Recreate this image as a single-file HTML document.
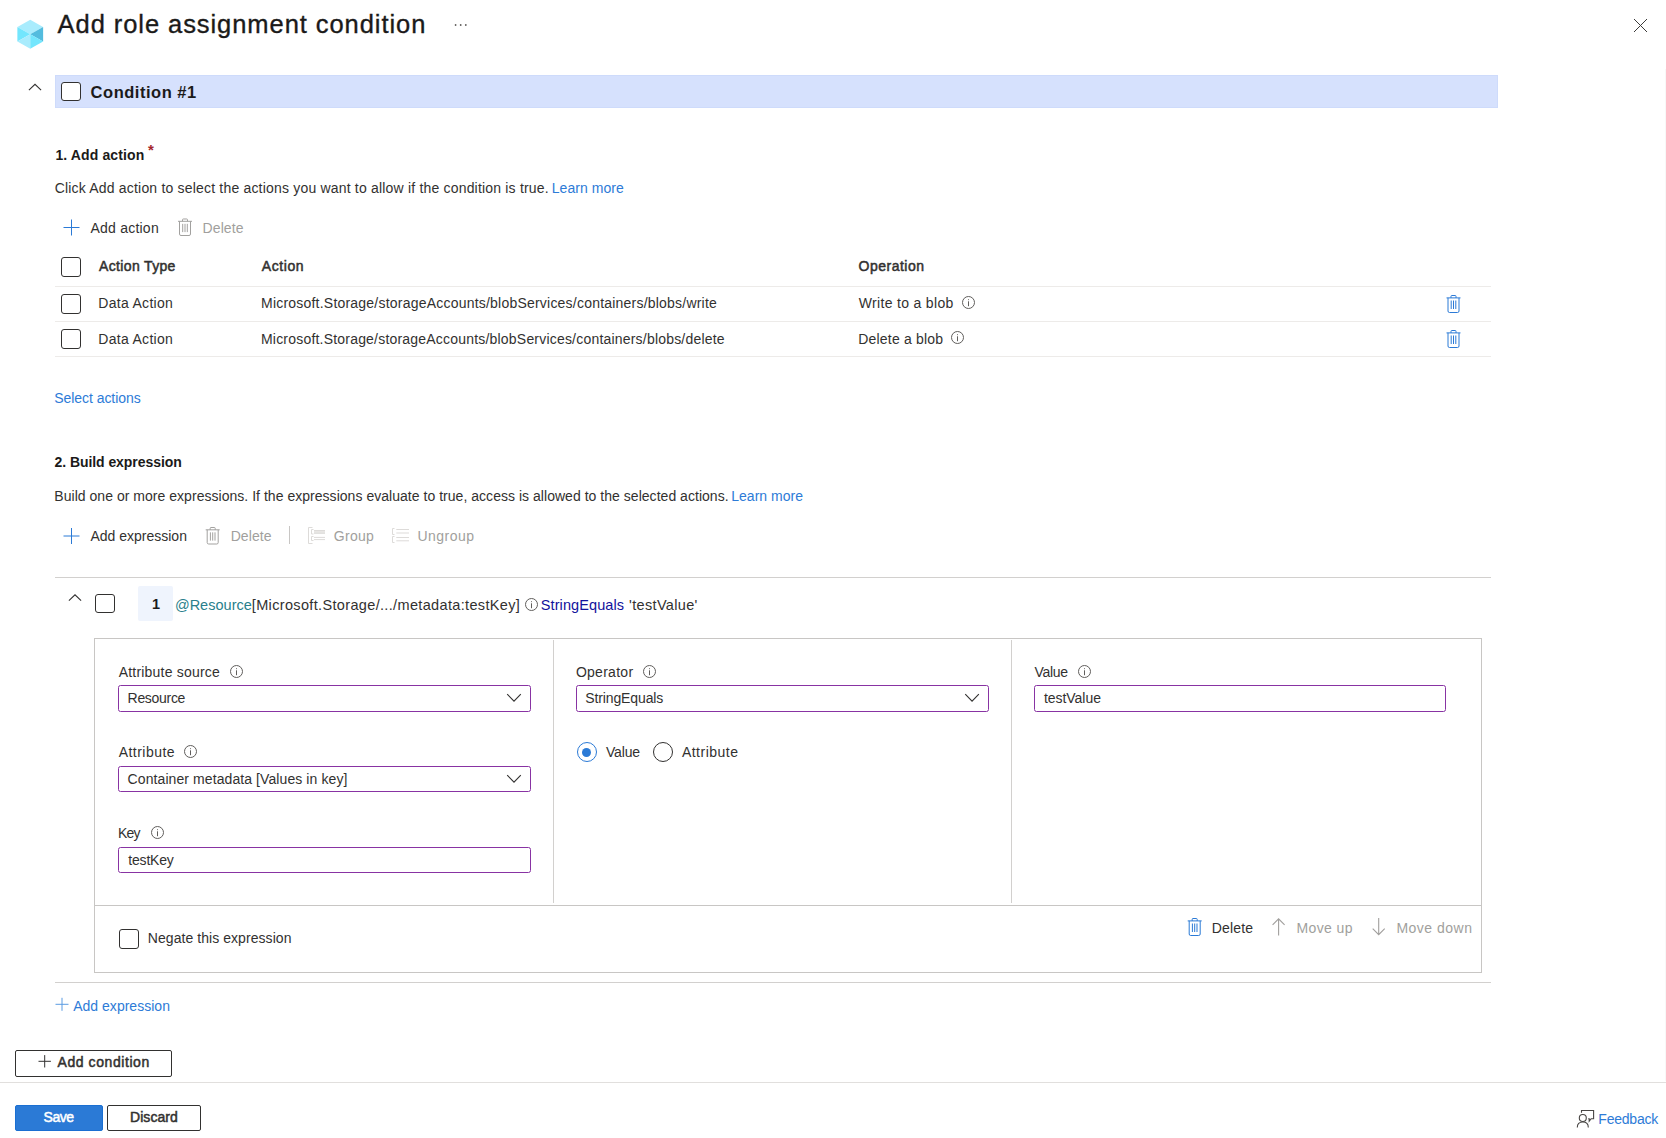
<!DOCTYPE html>
<html lang="en"><head><meta charset="utf-8"><title>Add role assignment condition</title>
<style>
html,body{margin:0;padding:0;background:#fff}
body{width:1666px;height:1138px;position:relative;overflow:hidden;font-family:"Liberation Sans",sans-serif;color:#323130}
.t{position:absolute;white-space:pre;line-height:20px;margin:0}
.a{position:absolute}
.hl{position:absolute;height:1px}
.vl{position:absolute;width:1px}
.cb{position:absolute;box-sizing:border-box;width:20px;height:20px;border:1px solid #323130;border-radius:3px;background:#fff}
.inp{position:absolute;box-sizing:border-box;height:27px;border:1px solid #8833a3;border-radius:2.5px;background:#fff}
svg{position:absolute;overflow:visible}
</style></head><body>

<header>
<svg style="left:17px;top:19px" width="28" height="31" viewBox="0 0 28 31" ><g transform="translate(0.4,0.8) scale(0.9885,0.9667)"><polygon points="13,0 26,7.5 13,15 0,7.5" fill="#a9ecfd"/><polygon points="0,7.5 13,15 0,22.5" fill="#73e6fd"/><polygon points="0,22.5 13,15 13,30" fill="#a9ecfd"/><polygon points="26,7.5 13,15 26,22.5" fill="#53bcde"/><polygon points="26,22.5 13,15 13,30" fill="#73e6fd"/></g></svg>
<h1 style="margin:0;font-size:inherit;font-weight:inherit"><span class="t" style="left:57.6px;top:14px;font-size:25.5px;font-weight:400;color:#1b1a19;letter-spacing:0.932px;-webkit-text-stroke:0.35px #1b1a19;">Add role assignment condition</span></h1>
<svg style="left:454px;top:23px" width="14" height="4" viewBox="0 0 14 4" fill="#605e5c"><circle cx="1.6" cy="2" r="0.9"/><circle cx="6.7" cy="2" r="0.9"/><circle cx="11.8" cy="2" r="0.9"/></svg>
<svg style="left:1633px;top:18px" width="15" height="15" viewBox="0 0 15 15" stroke="#3b3a39" stroke-width="1"><path d="M1 1L14 14M14 1L1 14"/></svg>
</header>
<div class="vl" style="left:1665px;top:69px;height:1012px;background:#f8f8f8"></div>
<main>
<svg style="left:27px;top:83px" width="17" height="10" viewBox="0 0 17 10" fill="none" stroke="#323130" stroke-width="1.1"><g transform="translate(0.9,0)"><path d="M1 7.2L7.1 1.3L13.2 7.2"/></g></svg>
<div class="a" style="left:55px;top:75px;width:1443px;height:33px;box-sizing:border-box;background:#d6e1fd;border:1px solid #cedbfb"></div>
<div class="cb" style="left:61px;top:82px;height:19px"></div>
<span class="t" style="left:90.6px;top:82px;font-size:16.5px;font-weight:700;color:#1b1a19;letter-spacing:0.519px;">Condition #1</span>
<span class="t" style="left:55.4px;top:145px;font-size:14px;font-weight:700;color:#1b1a19;letter-spacing:0.124px;">1. Add action</span>
<span class="t" style="left:148.1px;top:140px;font-size:15px;font-weight:700;color:#a4262c;letter-spacing:0.0px;">*</span>
<span class="t" style="left:54.7px;top:178px;font-size:14px;font-weight:400;color:#323130;letter-spacing:0.19px;">Click Add action to select the actions you want to allow if the condition is true.</span>
<span class="t" style="left:551.8px;top:178px;font-size:14px;font-weight:400;color:#2d7bd7;letter-spacing:0.04px;">Learn more</span>
<svg style="left:63px;top:219px" width="18" height="18" viewBox="0 0 18 18" fill="none" stroke="#2b7ad6" stroke-width="1"><g transform="translate(0.5,0.5)"><path d="M8 0V16M0 8H16"/></g></svg>
<span class="t" style="left:90.4px;top:218px;font-size:14px;font-weight:400;color:#323130;letter-spacing:0.235px;">Add action</span>
<svg style="left:178px;top:218px" width="15" height="19" viewBox="0 0 15 19" fill="none" stroke="#a19f9d" stroke-width="1"><g transform="translate(0,0.5) scale(1,0.9722)"><path d="M0 2.9H14"/><path d="M4.5 2.9V1.3Q4.5 0.5 5.3 0.5H8.7Q9.5 0.5 9.5 1.3V2.9"/><path d="M1.5 2.9V16Q1.5 17.5 3 17.5H11Q12.5 17.5 12.5 16V2.9"/><path d="M4.7 5.5V14M7 5.5V14M9.3 5.5V14"/></g></svg>
<span class="t" style="left:202.6px;top:218px;font-size:14px;font-weight:400;color:#a19f9d;letter-spacing:0.072px;">Delete</span>
<div class="cb" style="left:61px;top:257px;height:20px"></div>
<span class="t" style="left:99.1px;top:256px;font-size:14px;font-weight:400;color:#323130;letter-spacing:0.341px;-webkit-text-stroke:0.5px #323130;">Action Type</span>
<span class="t" style="left:261.7px;top:256px;font-size:14px;font-weight:400;color:#323130;letter-spacing:0.601px;-webkit-text-stroke:0.5px #323130;">Action</span>
<span class="t" style="left:858.6px;top:256px;font-size:14px;font-weight:400;color:#323130;letter-spacing:0.489px;-webkit-text-stroke:0.5px #323130;">Operation</span>
<div class="hl" style="left:55px;top:286px;width:1436px;background:#edebe9"></div>
<div class="cb" style="left:61px;top:294px;height:20px"></div>
<span class="t" style="left:98.3px;top:293px;font-size:14px;font-weight:400;color:#323130;letter-spacing:0.295px;">Data Action</span>
<span class="t" style="left:261.0px;top:293px;font-size:14px;font-weight:400;color:#323130;letter-spacing:0.215px;">Microsoft.Storage/storageAccounts/blobServices/containers/blobs/write</span>
<span class="t" style="left:858.8px;top:293px;font-size:14px;font-weight:400;color:#323130;letter-spacing:0.32px;">Write to a blob</span>
<svg style="left:960px;top:294px" width="18" height="18" viewBox="0 0 18 18" ><g transform="translate(0,0)"><circle cx="8.5" cy="8.5" r="6" fill="none" stroke="#605e5c" stroke-width="1"/><rect x="8" y="7.3" width="1" height="4.9" fill="#605e5c"/><rect x="8" y="5" width="1" height="1.2" fill="#8a8886"/></g></svg>
<svg style="left:1446px;top:295px" width="16" height="19" viewBox="0 0 16 19" fill="none" stroke="#2b7ad6" stroke-width="1"><g transform="translate(0.5,0)"><path d="M0 2.9H14"/><path d="M4.5 2.9V1.3Q4.5 0.5 5.3 0.5H8.7Q9.5 0.5 9.5 1.3V2.9"/><path d="M1.5 2.9V16Q1.5 17.5 3 17.5H11Q12.5 17.5 12.5 16V2.9"/><path d="M4.7 5.5V14M7 5.5V14M9.3 5.5V14"/></g></svg>
<div class="hl" style="left:55px;top:321px;width:1436px;background:#edebe9"></div>
<div class="cb" style="left:61px;top:329px;height:20px"></div>
<span class="t" style="left:98.3px;top:329px;font-size:14px;font-weight:400;color:#323130;letter-spacing:0.295px;">Data Action</span>
<span class="t" style="left:261.0px;top:329px;font-size:14px;font-weight:400;color:#323130;letter-spacing:0.2px;">Microsoft.Storage/storageAccounts/blobServices/containers/blobs/delete</span>
<span class="t" style="left:858.3px;top:329px;font-size:14px;font-weight:400;color:#323130;letter-spacing:0.181px;">Delete a blob</span>
<svg style="left:949px;top:329px" width="18" height="18" viewBox="0 0 18 18" ><g transform="translate(0,0)"><circle cx="8.5" cy="8.5" r="6" fill="none" stroke="#605e5c" stroke-width="1"/><rect x="8" y="7.3" width="1" height="4.9" fill="#605e5c"/><rect x="8" y="5" width="1" height="1.2" fill="#8a8886"/></g></svg>
<svg style="left:1446px;top:330px" width="16" height="19" viewBox="0 0 16 19" fill="none" stroke="#2b7ad6" stroke-width="1"><g transform="translate(0.5,0)"><path d="M0 2.9H14"/><path d="M4.5 2.9V1.3Q4.5 0.5 5.3 0.5H8.7Q9.5 0.5 9.5 1.3V2.9"/><path d="M1.5 2.9V16Q1.5 17.5 3 17.5H11Q12.5 17.5 12.5 16V2.9"/><path d="M4.7 5.5V14M7 5.5V14M9.3 5.5V14"/></g></svg>
<div class="hl" style="left:55px;top:356px;width:1436px;background:#edebe9"></div>
<span class="t" style="left:54.2px;top:388px;font-size:14px;font-weight:400;color:#2d7bd7;letter-spacing:-0.045px;">Select actions</span>
<span class="t" style="left:54.5px;top:452px;font-size:14px;font-weight:700;color:#1b1a19;letter-spacing:-0.061px;">2. Build expression</span>
<span class="t" style="left:54.3px;top:486px;font-size:14px;font-weight:400;color:#323130;letter-spacing:0.032px;">Build one or more expressions. If the expressions evaluate to true, access is allowed to the selected actions.</span>
<span class="t" style="left:731.2px;top:486px;font-size:14px;font-weight:400;color:#2d7bd7;letter-spacing:0.029px;">Learn more</span>
<svg style="left:63px;top:528px" width="18" height="17" viewBox="0 0 18 17" fill="none" stroke="#2b7ad6" stroke-width="1"><g transform="translate(0.5,0)"><path d="M8 0V16M0 8H16"/></g></svg>
<span class="t" style="left:90.4px;top:526px;font-size:14px;font-weight:400;color:#323130;letter-spacing:0.002px;">Add expression</span>
<svg style="left:205px;top:527px" width="16" height="19" viewBox="0 0 16 19" fill="none" stroke="#a19f9d" stroke-width="1"><g transform="translate(0.7,0) scale(1,0.9722)"><path d="M0 2.9H14"/><path d="M4.5 2.9V1.3Q4.5 0.5 5.3 0.5H8.7Q9.5 0.5 9.5 1.3V2.9"/><path d="M1.5 2.9V16Q1.5 17.5 3 17.5H11Q12.5 17.5 12.5 16V2.9"/><path d="M4.7 5.5V14M7 5.5V14M9.3 5.5V14"/></g></svg>
<span class="t" style="left:230.7px;top:526px;font-size:14px;font-weight:400;color:#a19f9d;letter-spacing:0.072px;">Delete</span>
<div class="vl" style="left:289px;top:526px;height:18px;background:#c8c6c4"></div>
<svg style="left:308px;top:527px" width="17" height="17" viewBox="0 0 17 17" fill="none" stroke="#dddbd9" stroke-width="1"><path d="M4.5 0.5H0.5V16.5H4.5"/><path d="M5.5 2.5H3.5V7H5.5"/><path d="M5.5 9.5H3.5V13.5H5.5"/><rect x="6" y="3.3" width="11" height="3" fill="#e8e6e4" stroke="none"/><path d="M6 3.5H17M6 6.3H17M6 10.4H17M6 12.6H17"/></svg>
<span class="t" style="left:333.8px;top:526px;font-size:14px;font-weight:400;color:#a19f9d;letter-spacing:0.301px;">Group</span>
<svg style="left:392px;top:528px" width="17" height="15" viewBox="0 0 17 15" fill="none" stroke="#dddbd9" stroke-width="1"><path d="M2.5 0.5H0.5V6.5H2.5"/><path d="M2.5 8.5H0.5V14.5H2.5"/><path d="M4.3 1.5H17M4.3 5H17M4.3 9.5H17M4.3 12.8H17"/></svg>
<span class="t" style="left:417.5px;top:526px;font-size:14px;font-weight:400;color:#a19f9d;letter-spacing:0.472px;">Ungroup</span>
<div class="hl" style="left:55px;top:577px;width:1436px;background:#d2d0ce"></div>
<svg style="left:67px;top:593px" width="17" height="10" viewBox="0 0 17 10" fill="none" stroke="#323130" stroke-width="1.1"><g transform="translate(0.9,0.5)"><path d="M1 7.2L7.1 1.3L13.2 7.2"/></g></svg>
<div class="cb" style="left:95px;top:594px;height:19px"></div>
<div class="a" style="left:138px;top:586px;width:35px;height:35px;background:#eff4fd;border-radius:2px"></div>
<span class="t" style="left:152.1px;top:594px;font-size:14.5px;font-weight:700;color:#1b1a19;letter-spacing:0.0px;">1</span>
<span class="t" style="left:174.9px;top:595px;font-size:14.5px;font-weight:400;color:#2a7f8c;letter-spacing:0.02px;">@Resource</span>
<span class="t" style="left:251.8px;top:595px;font-size:14.5px;font-weight:400;color:#323130;letter-spacing:0.343px;">[Microsoft.Storage/.../metadata:testKey]</span>
<svg style="left:523px;top:596px" width="18" height="18" viewBox="0 0 18 18" ><g transform="translate(0,0)"><circle cx="8.5" cy="8.5" r="6" fill="none" stroke="#605e5c" stroke-width="1"/><rect x="8" y="7.3" width="1" height="4.9" fill="#605e5c"/><rect x="8" y="5" width="1" height="1.2" fill="#8a8886"/></g></svg>
<span class="t" style="left:540.8px;top:595px;font-size:14.5px;font-weight:400;color:#12129c;letter-spacing:0.096px;">StringEquals</span>
<span class="t" style="left:629.1px;top:595px;font-size:14.5px;font-weight:400;color:#323130;letter-spacing:0.334px;">'testValue'</span>
<section class="a" style="left:94px;top:638px;width:1388px;height:335px;box-sizing:border-box;border:1px solid #c8c6c4"></section>
<div class="vl" style="left:553px;top:640px;height:263px;background:#d2d0ce"></div>
<div class="vl" style="left:1011px;top:640px;height:263px;background:#d2d0ce"></div>
<div class="hl" style="left:95px;top:905px;width:1386px;background:#c8c6c4"></div>
<span class="t" style="left:118.7px;top:662px;font-size:14px;font-weight:400;color:#323130;letter-spacing:0.201px;">Attribute source</span>
<svg style="left:228px;top:663px" width="18" height="18" viewBox="0 0 18 18" ><g transform="translate(0,0)"><circle cx="8.5" cy="8.5" r="6" fill="none" stroke="#605e5c" stroke-width="1"/><rect x="8" y="7.3" width="1" height="4.9" fill="#605e5c"/><rect x="8" y="5" width="1" height="1.2" fill="#8a8886"/></g></svg>
<div class="inp" style="left:118px;top:685px;width:413px;height:27px"></div>
<span class="t" style="left:127.6px;top:688px;font-size:14px;font-weight:400;color:#323130;letter-spacing:-0.308px;">Resource</span>
<svg style="left:506px;top:693px" width="17" height="11" viewBox="0 0 17 11" fill="none" stroke="#323130" stroke-width="1.1"><g transform="translate(0.2,0.2)"><path d="M1 1L7.8 8L14.6 1"/></g></svg>
<span class="t" style="left:118.7px;top:742px;font-size:14px;font-weight:400;color:#323130;letter-spacing:0.465px;">Attribute</span>
<svg style="left:182px;top:743px" width="18" height="18" viewBox="0 0 18 18" ><g transform="translate(0,0)"><circle cx="8.5" cy="8.5" r="6" fill="none" stroke="#605e5c" stroke-width="1"/><rect x="8" y="7.3" width="1" height="4.9" fill="#605e5c"/><rect x="8" y="5" width="1" height="1.2" fill="#8a8886"/></g></svg>
<div class="inp" style="left:118px;top:766px;width:413px;height:26px"></div>
<span class="t" style="left:127.6px;top:769px;font-size:14px;font-weight:400;color:#323130;letter-spacing:0.088px;">Container metadata [Values in key]</span>
<svg style="left:506px;top:774px" width="17" height="11" viewBox="0 0 17 11" fill="none" stroke="#323130" stroke-width="1.1"><g transform="translate(0.2,0.1)"><path d="M1 1L7.8 8L14.6 1"/></g></svg>
<span class="t" style="left:118.0px;top:823px;font-size:14px;font-weight:400;color:#323130;letter-spacing:-0.832px;">Key</span>
<svg style="left:149px;top:824px" width="18" height="18" viewBox="0 0 18 18" ><g transform="translate(0,0)"><circle cx="8.5" cy="8.5" r="6" fill="none" stroke="#605e5c" stroke-width="1"/><rect x="8" y="7.3" width="1" height="4.9" fill="#605e5c"/><rect x="8" y="5" width="1" height="1.2" fill="#8a8886"/></g></svg>
<div class="inp" style="left:118px;top:847px;width:413px;height:26px"></div>
<span class="t" style="left:128.3px;top:850px;font-size:14px;font-weight:400;color:#323130;letter-spacing:-0.186px;">testKey</span>
<span class="t" style="left:575.9px;top:662px;font-size:14px;font-weight:400;color:#323130;letter-spacing:0.274px;">Operator</span>
<svg style="left:641px;top:663px" width="18" height="18" viewBox="0 0 18 18" ><g transform="translate(0,0)"><circle cx="8.5" cy="8.5" r="6" fill="none" stroke="#605e5c" stroke-width="1"/><rect x="8" y="7.3" width="1" height="4.9" fill="#605e5c"/><rect x="8" y="5" width="1" height="1.2" fill="#8a8886"/></g></svg>
<div class="inp" style="left:576px;top:685px;width:413px;height:27px"></div>
<span class="t" style="left:585.2px;top:688px;font-size:14px;font-weight:400;color:#323130;letter-spacing:-0.112px;">StringEquals</span>
<svg style="left:964px;top:693px" width="17" height="11" viewBox="0 0 17 11" fill="none" stroke="#323130" stroke-width="1.1"><g transform="translate(0.25,0.2)"><path d="M1 1L7.8 8L14.6 1"/></g></svg>
<div class="a" style="left:577px;top:742px;width:20px;height:20px;box-sizing:border-box;border:1px solid #2b7ad6;border-radius:50%"></div>
<div class="a" style="left:582.2px;top:747.7px;width:9px;height:9px;background:#2b7ad6;border-radius:50%"></div>
<span class="t" style="left:605.9px;top:742px;font-size:14px;font-weight:400;color:#323130;letter-spacing:-0.134px;">Value</span>
<div class="a" style="left:653px;top:742px;width:20px;height:20px;box-sizing:border-box;border:1px solid #323130;border-radius:50%"></div>
<span class="t" style="left:681.9px;top:742px;font-size:14px;font-weight:400;color:#323130;letter-spacing:0.503px;">Attribute</span>
<span class="t" style="left:1034.4px;top:662px;font-size:14px;font-weight:400;color:#323130;letter-spacing:-0.284px;">Value</span>
<svg style="left:1076px;top:663px" width="18" height="18" viewBox="0 0 18 18" ><g transform="translate(0,0)"><circle cx="8.5" cy="8.5" r="6" fill="none" stroke="#605e5c" stroke-width="1"/><rect x="8" y="7.3" width="1" height="4.9" fill="#605e5c"/><rect x="8" y="5" width="1" height="1.2" fill="#8a8886"/></g></svg>
<div class="inp" style="left:1034px;top:685px;width:412px;height:27px"></div>
<span class="t" style="left:1044.0px;top:688px;font-size:14px;font-weight:400;color:#323130;letter-spacing:-0.052px;">testValue</span>
<div class="cb" style="left:119px;top:929px;height:20px"></div>
<span class="t" style="left:147.8px;top:928px;font-size:14px;font-weight:400;color:#323130;letter-spacing:0.059px;">Negate this expression</span>
<svg style="left:1187px;top:918px" width="16" height="19" viewBox="0 0 16 19" fill="none" stroke="#2b7ad6" stroke-width="1"><g transform="translate(0.7,0)"><path d="M0 2.9H14"/><path d="M4.5 2.9V1.3Q4.5 0.5 5.3 0.5H8.7Q9.5 0.5 9.5 1.3V2.9"/><path d="M1.5 2.9V16Q1.5 17.5 3 17.5H11Q12.5 17.5 12.5 16V2.9"/><path d="M4.7 5.5V14M7 5.5V14M9.3 5.5V14"/></g></svg>
<span class="t" style="left:1211.8px;top:918px;font-size:14px;font-weight:400;color:#323130;letter-spacing:0.152px;">Delete</span>
<svg style="left:1271px;top:918px" width="16" height="19" viewBox="0 0 16 19" fill="none" stroke="#a19f9d" stroke-width="1.1"><g transform="translate(0.6,0)"><path d="M7 17.5V0.8M1 6.8L7 0.8L13 6.8"/></g></svg>
<span class="t" style="left:1296.4px;top:918px;font-size:14px;font-weight:400;color:#a19f9d;letter-spacing:0.413px;">Move up</span>
<svg style="left:1371px;top:918px" width="16" height="19" viewBox="0 0 16 19" fill="none" stroke="#a19f9d" stroke-width="1.1"><g transform="translate(0.7,0)"><path d="M7 0V16.7M1 10.7L7 16.7L13 10.7"/></g></svg>
<span class="t" style="left:1396.4px;top:918px;font-size:14px;font-weight:400;color:#a19f9d;letter-spacing:0.493px;">Move down</span>
<div class="hl" style="left:55px;top:982px;width:1436px;background:#d2d0ce"></div>
<svg style="left:55px;top:997px" width="15" height="15" viewBox="0 0 15 15" fill="none" stroke="#5a9be2" stroke-width="1"><g transform="translate(0.5,0.8)"><path d="M6.5 0V13.0M0 6.5H13.0"/></g></svg>
<span class="t" style="left:73.2px;top:996px;font-size:14px;font-weight:400;color:#2d7bd7;letter-spacing:0.017px;">Add expression</span>
<div class="a" style="left:15px;top:1050px;width:157px;height:27px;box-sizing:border-box;border:1px solid #323130;border-radius:2px"></div>
<svg style="left:38px;top:1055px" width="14" height="14" viewBox="0 0 14 14" fill="none" stroke="#323130" stroke-width="1"><g transform="translate(0.5,0.1)"><path d="M6.2 0V12.4M0 6.2H12.4"/></g></svg>
<span class="t" style="left:57.5px;top:1052px;font-size:14px;font-weight:400;color:#323130;letter-spacing:0.575px;-webkit-text-stroke:0.5px #323130;">Add condition</span>
</main>
<footer>
<div class="hl" style="left:0px;top:1082px;width:1666px;background:#e1dfdd"></div>
<div class="a" style="left:15px;top:1105px;width:88px;height:26px;box-sizing:border-box;background:#2b7ad6;border:1px solid #1a6fd2;border-radius:2px"></div>
<span class="t" style="left:43.6px;top:1107px;font-size:14px;font-weight:400;color:#ffffff;letter-spacing:-0.506px;-webkit-text-stroke:0.5px #ffffff;">Save</span>
<div class="a" style="left:107px;top:1105px;width:94px;height:26px;box-sizing:border-box;border:1px solid #323130;border-radius:2px"></div>
<span class="t" style="left:130.0px;top:1107px;font-size:14px;font-weight:400;color:#323130;letter-spacing:0.062px;-webkit-text-stroke:0.5px #323130;">Discard</span>
<svg style="left:1576px;top:1109px" width="20" height="20" viewBox="0 0 20 20" fill="none" stroke="#484644" stroke-width="1.1"><circle cx="6.8" cy="9" r="3.5"/><path d="M1.3 18.4Q1.3 13 6.8 13Q12.3 13 12.3 18.4"/><path d="M5.5 3.8V1.5H17.6V9.7H15.2L13.2 12.2V9.7H12.2"/></svg>
<span class="t" style="left:1598.3px;top:1109px;font-size:14px;font-weight:400;color:#2d7bd7;letter-spacing:-0.223px;">Feedback</span>
</footer>
</body></html>
